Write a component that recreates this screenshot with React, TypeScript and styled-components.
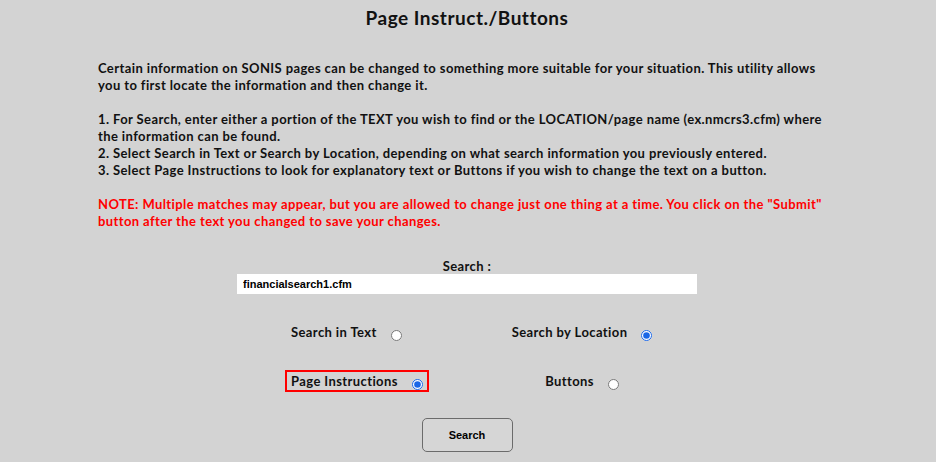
import styled, { createGlobalStyle } from 'styled-components';

const GlobalStyle = createGlobalStyle`
  html, body {
    margin: 0;
    padding: 0;
    background: #d3d3d3;
  }
  body {
    font-family: 'Lato', 'Liberation Sans', sans-serif;
    color: #111;
  }
`;

const Page = styled.div`
  width: 936px;
  height: 462px;
  box-sizing: border-box;
  padding-right: 2px;
  overflow: hidden;
  background: #d3d3d3;
  display: flex;
  flex-direction: column;
  align-items: center;
`;

const Title = styled.h1`
  margin: 6px 0 0;
  font-size: 19px;
  letter-spacing: 0.5px;
  line-height: 24px;
  font-weight: 700;
  text-align: center;
`;

const Instructions = styled.div`
  align-self: flex-start;
  margin: 30px 0 0 98px;
  font-size: 13px;
  letter-spacing: 0.4px;
  font-weight: 700;
  line-height: 17px;
  white-space: nowrap;
`;

const Note = styled.div`
  color: #ff0000;
`;

const SearchBlock = styled.div`
  margin-top: 28px;
  display: flex;
  flex-direction: column;
  align-items: center;
`;

const SearchLabel = styled.label`
  font-size: 13px;
  letter-spacing: 0.4px;
  font-weight: 700;
  line-height: 16px;
`;

const SearchInput = styled.input`
  width: 460px;
  height: 20px;
  box-sizing: border-box;
  border: none;
  background: #fff;
  padding: 0 6px;
  font-family: 'Liberation Sans', Arial, sans-serif;
  font-weight: 700;
  font-size: 11px;
  color: #000;
  outline: none;
`;

const Options = styled.div`
  align-self: flex-start;
  margin: 27px 0 0 285px;
  display: grid;
  grid-template-columns: 199px 196px;
  row-gap: 27px;
`;

const Option = styled.label<{ $boxed?: boolean; $right?: boolean }>`
  justify-self: ${(p) => (p.$right ? 'center' : 'start')};
  display: inline-flex;
  align-items: center;
  height: 22px;
  box-sizing: border-box;
  padding: 0 4px;
  border: 2px solid ${(p) => (p.$boxed ? '#ff0000' : 'transparent')};
  font-size: 13px;
  letter-spacing: 0.4px;
  font-weight: 700;
  white-space: nowrap;
`;

const Radio = styled.input.attrs({ type: 'radio' })`
  width: 11px;
  height: 11px;
  margin: 6px 0 0 14px;
  accent-color: #1a66e6;
`;

const ButtonRow = styled.div`
  margin-top: 26px;
`;

const SearchButton = styled.button`
  width: 91px;
  height: 34px;
  border: 1px solid #6b6b6b;
  border-radius: 5px;
  background: #d6d6d6;
  font-family: 'Liberation Sans', Arial, sans-serif;
  font-weight: 700;
  font-size: 11px;
  color: #000;
  cursor: pointer;
`;

export default function App() {
  return (
    <Page>
      <GlobalStyle />
      <Title>Page Instruct./Buttons</Title>
      <Instructions>
        Certain information on SONIS pages can be changed to something more suitable for your situation. This utility allows
        <br />
        you to first locate the information and then change it.
        <br />
        <br />
        1. For Search, enter either a portion of the TEXT you wish to find or the LOCATION/page name (ex.nmcrs3.cfm) where
        <br />
        the information can be found.
        <br />
        2. Select Search in Text or Search by Location, depending on what search information you previously entered.
        <br />
        3. Select Page Instructions to look for explanatory text or Buttons if you wish to change the text on a button.
        <br />
        <br />
        <Note>
          NOTE: Multiple matches may appear, but you are allowed to change just one thing at a time. You click on the "Submit"
          <br />
          button after the text you changed to save your changes.
        </Note>
      </Instructions>
      <SearchBlock>
        <SearchLabel htmlFor="search">Search :</SearchLabel>
        <SearchInput id="search" defaultValue="financialsearch1.cfm" />
      </SearchBlock>
      <Options>
        <Option>
          Search in Text
          <Radio name="where" />
        </Option>
        <Option $right>
          Search by Location
          <Radio name="where" defaultChecked />
        </Option>
        <Option $boxed>
          Page Instructions
          <Radio name="kind" defaultChecked />
        </Option>
        <Option $right>
          Buttons
          <Radio name="kind" />
        </Option>
      </Options>
      <ButtonRow>
        <SearchButton>Search</SearchButton>
      </ButtonRow>
    </Page>
  );
}
